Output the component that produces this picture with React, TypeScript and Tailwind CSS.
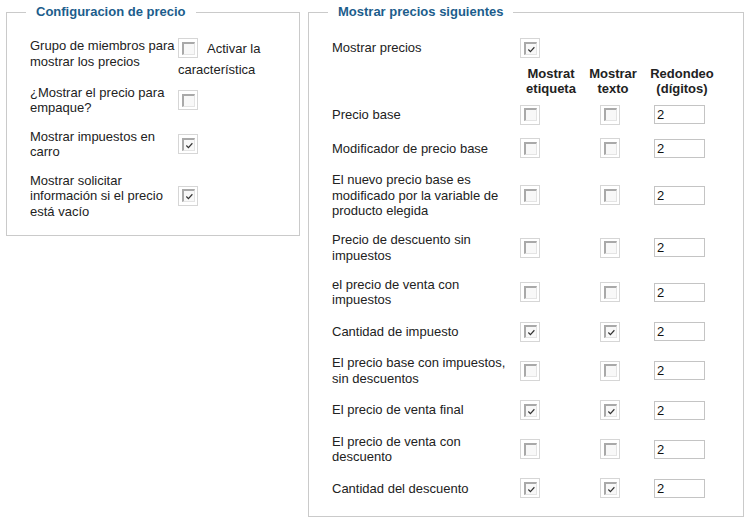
import React from 'react';

function Box({ checked = false }: { checked?: boolean }) {
    return (
        <span className="inline-flex w-[20px] h-[20px] shrink-0 items-center justify-center border border-[#d6d6d6] bg-white">
            <span className="relative block w-[13px] h-[13px] border-t-2 border-l-2 border-r border-b border-t-[#a9a9a9] border-l-[#a9a9a9] border-r-[#e4e4e4] border-b-[#e4e4e4] bg-[#f8f8f8]">
                {checked && (
                    <svg viewBox="0 0 10 10" className="absolute left-[1px] top-[1px] w-[9px] h-[9px]">
                        <path d="M1.5 5 L3.8 7.3 L8.2 2.5" fill="none" stroke="#333" strokeWidth="1.3" />
                    </svg>
                )}
            </span>
        </span>
    );
}

function Panel({ title, className, children }: { title: string; className: string; children: React.ReactNode }) {
    return (
        <fieldset className={`border border-[#cacaca] ${className}`}>
            <legend className="ml-[-4px] px-[10px] text-[13px] leading-[16px] font-bold text-[#1c5d8c]">{title}</legend>
            {children}
        </fieldset>
    );
}

const rows = [
    { label: 'Precio base', a: false, b: false },
    { label: 'Modificador de precio base', a: false, b: false },
    { label: 'El nuevo precio base es modificado por la variable de producto elegida', a: false, b: false },
    { label: 'Precio de descuento sin impuestos', a: false, b: false },
    { label: 'el precio de venta con impuestos', a: false, b: false },
    { label: 'Cantidad de impuesto', a: true, b: true },
    { label: 'El precio base con impuestos, sin descuentos', a: false, b: false },
    { label: 'El precio de venta final', a: true, b: true },
    { label: 'El precio de venta con descuento', a: false, b: false },
    { label: 'Cantidad del descuento', a: true, b: true },
];

export default function App() {
    return (
        <div className="flex items-start gap-[8px] pl-[6px] pt-[4px] bg-white min-h-[523px] text-[13px] leading-[15.5px] text-[#222] font-['Liberation_Sans',Arial,sans-serif]">
            {/* Configuracion de precio */}
            <Panel title="Configuracion de precio" className="w-[294px] pt-[18px] pb-[16px] pl-[23px]">
                <div className="flex flex-col gap-[13px]">
                    <div className="flex items-start mb-[-6px]">
                        <div className="w-[148px]">Grupo de miembros para mostrar los precios</div>
                        <div className="flex flex-col">
                            <div className="flex items-center h-[20px]">
                                <Box />
                                <span className="ml-[9px] mt-[1px]">Activar la</span>
                            </div>
                            <span className="mt-[4px]">característica</span>
                        </div>
                    </div>
                    <div className="flex items-center">
                        <div className="w-[148px]">¿Mostrar el precio para empaque?</div>
                        <Box />
                    </div>
                    <div className="flex items-center">
                        <div className="w-[148px]">Mostrar impuestos en carro</div>
                        <Box checked />
                    </div>
                    <div className="flex items-center">
                        <div className="w-[148px]">Mostrar solicitar información si el precio está vacío</div>
                        <Box checked />
                    </div>
                </div>
            </Panel>

            {/* Mostrar precios siguientes */}
            <Panel title="Mostrar precios siguientes" className="w-[436px] pt-[18px] pb-[18px] pl-[23px]">
                <div className="flex flex-col gap-[13.7px]">
                    <div className="flex items-center">
                        <div className="w-[188px]">Mostrar precios</div>
                        <Box checked />
                    </div>
                    <div className="flex items-center mt-[-6px] mb-[-5.7px] font-bold text-center">
                        <div className="w-[188px]" />
                        <div className="w-[62px]">Mostrat<br />etiqueta</div>
                        <div className="w-[62px]">Mostrar<br />texto</div>
                        <div className="w-[76px]">Redondeo<br />(dígitos)</div>
                    </div>
                    {rows.map((row) => (
                        <div key={row.label} className="flex items-center">
                            <div className="w-[188px] pr-[8px]">{row.label}</div>
                            <div className="w-[62px]">
                                <Box checked={row.a} />
                            </div>
                            <div className="w-[62px] pl-[18px]">
                                <Box checked={row.b} />
                            </div>
                            <div className="pl-[10px]">
                                <input
                                    type="text"
                                    defaultValue="2"
                                    readOnly
                                    className="block w-[51px] h-[19px] border border-[#c4c4c4] px-[2px] text-[13px] leading-[15px] text-[#111] outline-none"
                                />
                            </div>
                        </div>
                    ))}
                </div>
            </Panel>
        </div>
    );
}
